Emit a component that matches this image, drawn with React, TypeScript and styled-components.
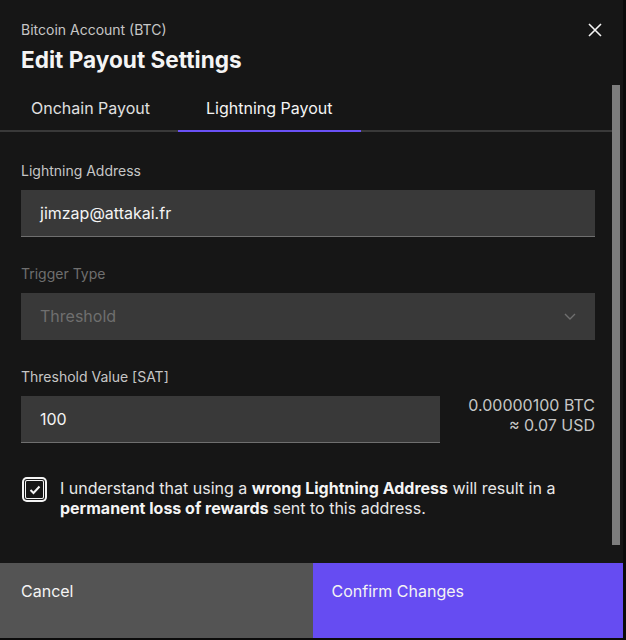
import React from "react";
import styled, { createGlobalStyle } from "styled-components";

const Global = createGlobalStyle`
  html, body { margin: 0; padding: 0; background: #0b0b0b; }
  body { font-family: Inter, "Noto Sans", sans-serif; -webkit-font-smoothing: antialiased; }
  * { box-sizing: border-box; }
`;

const Modal = styled.div`
  width: 623px;
  height: 638px;
  background: #161616;
  display: flex;
  flex-direction: column;
  color: #f4f4f4;
  overflow: hidden;
`;

const Header = styled.header`
  position: relative;
  padding: 20px 21px 0 21px;
  height: 85px;
`;

const Subtitle = styled.div`
  font-size: 14px;
  line-height: 20px;
  color: #c6c6c6;
`;

const Title = styled.h2`
  margin: 6px 0 0 0;
  font-size: 22.6px;
  line-height: 28px;
  font-weight: 700;
  color: #f4f4f4;
`;

const Close = styled.button`
  position: absolute;
  top: 18px;
  right: 16px;
  width: 24px;
  height: 24px;
  border: 0;
  padding: 0;
  background: transparent;
  display: flex;
  align-items: center;
  justify-content: center;
`;

const Body = styled.div`
  flex: 1;
  display: flex;
  min-height: 0;
`;

const Content = styled.div`
  flex: 1;
  display: flex;
  flex-direction: column;
`;

const Track = styled.div`
  width: 8px;
  margin-right: 3px;
  padding-bottom: 18px;
  display: flex;
`;

const Thumb = styled.div`
  flex: 1;
  background: #7d7d7d;
`;

const TabBar = styled.div`
  display: flex;
  height: 47px;
  border-bottom: 2px solid #393939;
  padding-left: 3px;
`;

const Tab = styled.div<{ $active?: boolean }>`
  padding: 0 28px;
  display: flex;
  align-items: center;
  font-size: 16px;
  color: ${(p) => (p.$active ? "#f4f4f4" : "#e0e0e0")};
  margin-bottom: -2px;
  border-bottom: 2px solid ${(p) => (p.$active ? "#6a51f5" : "transparent")};
`;

const Form = styled.div`
  padding: 30px 17px 0 21px;
  display: flex;
  flex-direction: column;
`;

const Field = styled.div`
  display: flex;
  flex-direction: column;
  margin-bottom: 28px;
`;

const Label = styled.label<{ $disabled?: boolean }>`
  font-size: 14px;
  line-height: 18px;
  margin-bottom: 10px;
  color: ${(p) => (p.$disabled ? "#6f6f6f" : "#c6c6c6")};
`;

const Input = styled.div<{ $disabled?: boolean }>`
  height: 47px;
  background: #393939;
  border-bottom: 1px solid ${(p) => (p.$disabled ? "#393939" : "#6f6f6f")};
  padding: 0 19px;
  display: flex;
  align-items: center;
  justify-content: space-between;
  font-size: 16px;
  color: ${(p) => (p.$disabled ? "#6f6f6f" : "#f4f4f4")};
`;

const Row = styled.div`
  display: flex;
  align-items: center;
  gap: 28px;
`;

const Grow = styled.div`
  flex: 1;
`;

const Conversion = styled.div`
  text-align: right;
  font-size: 16px;
  line-height: 20px;
  color: #c6c6c6;
  margin-top: -10px;
`;

const CheckRow = styled.div`
  display: flex;
  align-items: flex-start;
  gap: 16px;
  margin-top: 7px;
  padding-left: 4px;
`;

const Box = styled.div`
  margin-top: 2px;
  width: 19px;
  height: 19px;
  flex: none;
  border: 1px solid #f4f4f4;
  border-radius: 2px;
  box-shadow: 0 0 0 1px #161616, 0 0 0 3px #f4f4f4;
  display: flex;
  align-items: center;
  justify-content: center;
`;

const CheckText = styled.p`
  margin: 0;
  font-size: 16px;
  line-height: 20px;
  color: #e8e8e8;
  b { color: #f4f4f4; font-weight: 700; }
`;

const Footer = styled.div`
  display: flex;
  height: 75px;
`;

const Button = styled.button<{ $primary?: boolean }>`
  flex: 1;
  border: 0;
  margin: 0;
  text-align: left;
  align-items: flex-start;
  padding: 19px 19px 0 ${(p) => (p.$primary ? "19px" : "21px")};
  font-family: inherit;
  font-size: 16px;
  line-height: 18px;
  display: flex;
  color: #f4f4f4;
  background: ${(p) => (p.$primary ? "#664cf2" : "#545454")};
`;

export default function App() {
  return (
    <>
      <Global />
      <Modal>
        <Header>
          <Subtitle>Bitcoin Account (BTC)</Subtitle>
          <Title>Edit Payout Settings</Title>
          <Close aria-label="close">
            <svg width="14" height="14" viewBox="0 0 14 14">
              <path d="M1 1L13 13M13 1L1 13" stroke="#f4f4f4" strokeWidth="1.6" />
            </svg>
          </Close>
        </Header>
        <Body>
          <Content>
            <TabBar>
              <Tab>Onchain Payout</Tab>
              <Tab $active>Lightning Payout</Tab>
            </TabBar>
            <Form>
              <Field>
                <Label>Lightning Address</Label>
                <Input>jimzap@attakai.fr</Input>
              </Field>
              <Field>
                <Label $disabled>Trigger Type</Label>
                <Input $disabled>
                  Threshold
                  <svg width="12" height="7" viewBox="0 0 12 7">
                    <path d="M1 1L6 6L11 1" fill="none" stroke="#6f6f6f" strokeWidth="1.4" />
                  </svg>
                </Input>
              </Field>
              <Field>
                <Label>Threshold Value [SAT]</Label>
                <Row>
                  <Grow>
                    <Input>100</Input>
                  </Grow>
                  <Conversion>
                    0.00000100 BTC
                    <br />≈ 0.07 USD
                  </Conversion>
                </Row>
              </Field>
              <CheckRow>
                <Box>
                  <svg width="12" height="10" viewBox="0 0 12 10">
                    <path d="M1.5 5L4.5 8L10.5 1.5" fill="none" stroke="#f4f4f4" strokeWidth="2" />
                  </svg>
                </Box>
                <CheckText>
                  I understand that using a <b>wrong Lightning Address</b> will result in a{" "}
                  <b>permanent loss of rewards</b> sent to this address.
                </CheckText>
              </CheckRow>
            </Form>
          </Content>
          <Track>
            <Thumb />
          </Track>
        </Body>
        <Footer>
          <Button>Cancel</Button>
          <Button $primary>Confirm Changes</Button>
        </Footer>
      </Modal>
    </>
  );
}
